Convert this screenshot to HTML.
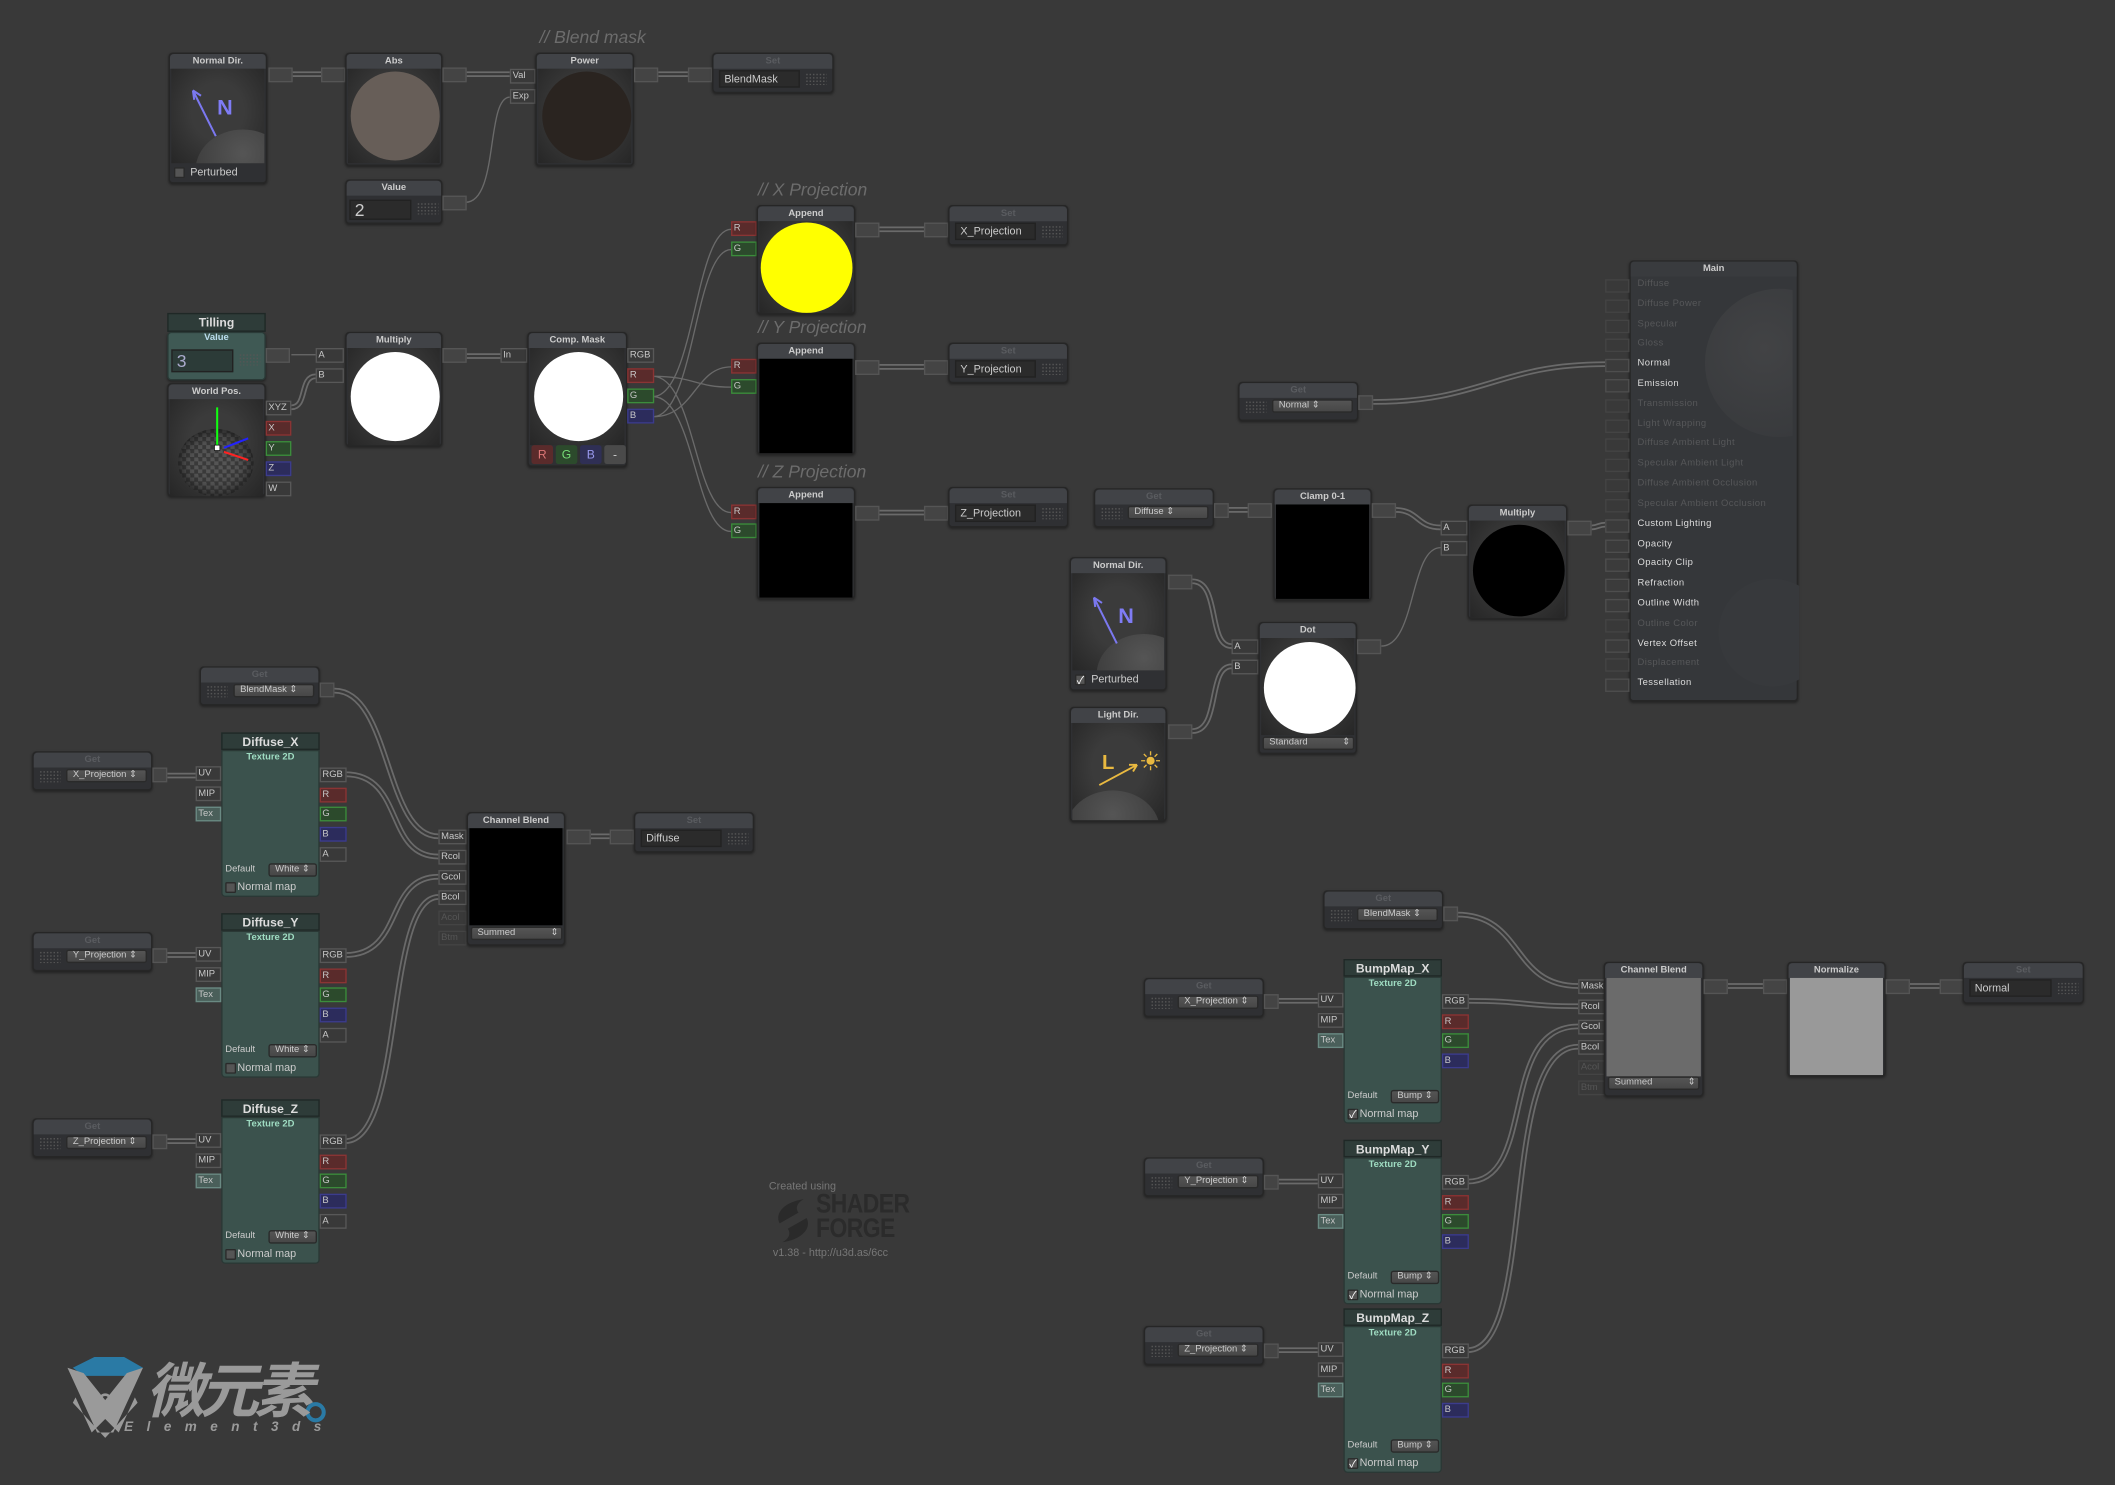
<!DOCTYPE html>
<html><head><meta charset="utf-8"><style>
html,body{margin:0;padding:0;background:#393939;overflow:hidden;width:2115px;height:1485px}
#w{position:absolute;left:0;top:0;width:1568px;height:1101px;transform:scale(1.34885);transform-origin:0 0;font-family:"Liberation Sans","Noto Sans CJK SC",sans-serif;color:#bbb}
#w div{position:absolute;box-sizing:border-box}
.n{background:#2f3033;border:1px solid #262626;border-radius:3px;box-shadow:0 1px 2px rgba(0,0,0,.4)}
.hd{left:0;top:0;right:0;height:11px;background:#414347;border-radius:3px 3px 0 0;font-size:7px;font-weight:bold;text-align:center;line-height:11px;color:#ccc}
.dim{color:#5a5c60}
.pv{left:1px;right:1px;top:11px;background:radial-gradient(ellipse at 50% 45%,#3b3b3b 40%,#262626 100%)}
.c{border-radius:50%}
.p{height:11px;border:1px solid #585858;background:#393939;font-size:7px;line-height:9px;padding-left:1px;color:#c8c8c8}
.pr{background:#5a2b2b;border-color:#8a3434}
.pg{background:#2c4a2c;border-color:#3c8c3c}
.pb{background:#2c2c5c;border-color:#3c3c8c}
.pd{color:#555;border-color:#444;background:#393939}
.ob{width:18px;height:11px;background:#444;border:1px solid #555}
.cm{font-size:13px;font-style:italic;color:#6c6c6c;white-space:nowrap}
.dd{height:10px;background:linear-gradient(#555,#474747);border:1px solid #2a2a2a;border-radius:2px;font-size:7px;line-height:8px;padding-left:4px;color:#ccc;white-space:nowrap}
.fld{height:13px;background:#2b2b2b;border:1px solid #222;font-size:8px;line-height:11px;padding-left:3px;color:#ccc}
.grip{width:16px;height:9px;background-image:radial-gradient(#555 0.6px,transparent 0.7px);background-size:2.5px 2.5px}
.tt{height:13px;width:73px;background:#2e3c39;border:1px solid #1f2826;font-size:9px;font-weight:bold;text-align:center;line-height:12px;color:#ddd}
.tb{width:73px;height:109px;top:13px;left:0;background:#3b524d;border:1px solid #2a3835;border-radius:0 0 3px 3px}
.t2{font-size:7px;font-weight:bold;color:#9fdcc2;text-align:center;left:0;right:0;top:1px}
.sm{font-size:7px;color:#ccc;white-space:nowrap}
.cb{width:8px;height:8px;background:#555;border:1px solid #2a2a2a;border-radius:1px;font-size:8px;line-height:7px;color:#fff;text-align:center}
.mr{font-size:7px;left:5px;white-space:nowrap;letter-spacing:.3px}
.mi{width:18px;height:10px;left:-19px;background:#3b3b3b;border:1px solid #4e4e4e}
</style></head><body><div id="w">

<svg width="1568" height="1101" style="position:absolute;left:0;top:0" fill="none">
<g stroke="#6a6a6a" stroke-width="4.2">
<path d="M216 55H238M345 55H378M488 55H510M216 302C228 302 222 279 234 279M346 264H371M652 170H685M652 272H685M652 380H685M1018 298C1100 298 1110 270 1190 270M910 378H925M1034 378C1052 378 1050 391 1068 391M884 431C905 431 895 479 913 479M884 542C905 542 895 494 913 494M1180 391C1185 391 1185 389 1190 389M248 512C290 512 285 620 325 620M256 574C300 574 285 635 325 635M256 708C300 708 285 650 325 650M256 846C300 846 285 665 325 665M124 575H145M124 708H145M124 846H145M438 620H452M1080 678C1130 678 1120 731 1170 731M1088 742C1130 742 1130 746 1170 746M1088 876C1140 876 1110 761 1170 761M1088 1001C1140 1001 1110 776 1170 776M948 742H977M948 876H977M948 1001H977M1281 731H1307M1416 731H1438"/>
</g>
<g stroke="#393939" stroke-width="1.6">
<path d="M216 55H238M345 55H378M488 55H510M216 302C228 302 222 279 234 279M346 264H371M652 170H685M652 272H685M652 380H685M1018 298C1100 298 1110 270 1190 270M910 378H925M1034 378C1052 378 1050 391 1068 391M884 431C905 431 895 479 913 479M884 542C905 542 895 494 913 494M1180 391C1185 391 1185 389 1190 389M248 512C290 512 285 620 325 620M256 574C300 574 285 635 325 635M256 708C300 708 285 650 325 650M256 846C300 846 285 665 325 665M124 575H145M124 708H145M124 846H145M438 620H452M1080 678C1130 678 1120 731 1170 731M1088 742C1130 742 1130 746 1170 746M1088 876C1140 876 1110 761 1170 761M1088 1001C1140 1001 1110 776 1170 776M948 742H977M948 876H977M948 1001H977M1281 731H1307M1416 731H1438"/>
</g>
<g stroke="#6a6a6a" stroke-width="1">
<path d="M345 150C370 150 360 72 378 72M216 263H234M1024 479C1050 479 1045 406 1068 406"/>
<path d="M484 294C515 294 515 170 542 170M484 309C515 309 515 185 542 185M484 279C515 279 515 287 542 287M484 309C515 309 515 272 542 272M484 279C515 279 515 380 542 380M484 294C515 294 515 394 542 394"/>
</g>
</svg>

<!-- top row -->
<div class="cm" style="left:400px;top:20px">// Blend mask</div>
<div class="n" style="left:125px;top:39px;width:73px;height:97px"><div class="hd">Normal Dir.</div>
<div class="pv" style="height:70px;overflow:hidden"><div class="c" style="left:18px;top:45px;width:70px;height:60px;background:radial-gradient(circle at 50% 30%,#555,#333)"></div>
<svg width="70" height="70" style="position:absolute;left:0;top:0"><path d="M33 50L16 16M16 16l1 7M16 16l6 4" stroke="#7b78f0" stroke-width="1.5" fill="none"/><text x="34" y="34" fill="#7f7cf5" font-size="16" font-weight="bold" font-family="Liberation Sans">N</text></svg></div>
<div class="cb" style="left:3px;top:84px"></div><div class="sm" style="left:15px;top:83px;font-size:8px">Perturbed</div></div>
<div class="ob" style="left:199px;top:50px"></div><div class="ob" style="left:238px;top:50px"></div>

<div class="n" style="left:256px;top:39px;width:72px;height:84px"><div class="hd">Abs</div><div class="pv" style="height:70px"><div class="c" style="left:2px;top:2px;width:66px;height:66px;background:#675e58"></div></div></div>
<div class="ob" style="left:328px;top:50px"></div>
<div class="p" style="left:378px;top:51px;width:19px">Val</div><div class="p" style="left:378px;top:66px;width:19px">Exp</div>
<div class="n" style="left:397px;top:39px;width:73px;height:84px"><div class="hd">Power</div><div class="pv" style="height:70px"><div class="c" style="left:3px;top:2px;width:66px;height:66px;background:#2a2420"></div></div></div>
<div class="ob" style="left:470px;top:50px"></div><div class="ob" style="left:510px;top:50px"></div>
<div class="n" style="left:528px;top:39px;width:90px;height:30px"><div class="hd dim">Set</div><div class="fld" style="left:4px;top:12px;width:60px">BlendMask</div><div class="grip" style="left:68px;top:14px"></div></div>
<div class="n" style="left:256px;top:133px;width:72px;height:33px"><div class="hd">Value</div><div class="fld" style="left:2px;top:14px;width:46px;height:15px;font-size:13px;line-height:14px">2</div><div class="grip" style="left:52px;top:16px"></div></div>
<div class="ob" style="left:328px;top:145px"></div>

<!-- second row -->
<div class="tt" style="left:124px;top:232px;height:14px;font-size:9px">Tilling</div>
<div class="n" style="left:124px;top:246px;width:73px;height:36px;background:#3f5954;border-color:#2a3a37"><div class="sm" style="left:0;right:0;text-align:center;top:0;font-weight:bold;color:#bde">Value</div><div class="fld" style="left:2px;top:12px;width:46px;height:17px;font-size:13px;line-height:15px;background:#2c3b38;color:#aac">3</div><div class="grip" style="left:52px;top:15px"></div></div>
<div class="ob" style="left:197px;top:258px"></div>
<div class="n" style="left:124px;top:284px;width:73px;height:84px"><div class="hd">World Pos.</div>
<div class="pv" style="height:72px"><div class="c" style="left:6px;top:22px;width:56px;height:50px;background:repeating-conic-gradient(#555 0 25%,#3a3a3a 0 50%) 0 0/6px 6px;box-shadow:inset 0 0 12px #111"></div>
<svg width="72" height="72" style="position:absolute;left:0;top:0"><path d="M35 6V34" stroke="#1f1" stroke-width="1.5"/><path d="M40 36L58 29" stroke="#22f" stroke-width="1.5"/><path d="M40 39L58 45" stroke="#f22" stroke-width="1.5"/><rect x="33" y="34" width="4" height="4" fill="#fff" stroke="#000" stroke-width=".5"/></svg></div></div>
<div class="p" style="left:197px;top:297px;width:19px">XYZ</div>
<div class="p pr" style="left:197px;top:312px;width:19px">X</div>
<div class="p pg" style="left:197px;top:327px;width:19px">Y</div>
<div class="p pb" style="left:197px;top:342px;width:19px">Z</div>
<div class="p" style="left:197px;top:357px;width:19px">W</div>
<div class="p" style="left:234px;top:258px;width:21px">A</div><div class="p" style="left:234px;top:273px;width:21px">B</div>
<div class="n" style="left:256px;top:246px;width:72px;height:85px"><div class="hd">Multiply</div><div class="pv" style="height:72px"><div class="c" style="left:2px;top:3px;width:66px;height:66px;background:#fff"></div></div></div>
<div class="ob" style="left:328px;top:258px"></div>
<div class="p" style="left:371px;top:258px;width:20px">In</div>
<div class="n" style="left:391px;top:246px;width:74px;height:100px"><div class="hd">Comp. Mask</div><div class="pv" style="height:72px"><div class="c" style="left:3px;top:3px;width:66px;height:66px;background:#fff"></div></div>
<div style="left:2px;top:83px;width:16px;height:14px;background:#5a2b2b;border-radius:2px;font-size:9px;color:#d77;text-align:center;line-height:14px">R</div>
<div style="left:20px;top:83px;width:16px;height:14px;background:#2c4a2c;border-radius:2px;font-size:9px;color:#7d7;text-align:center;line-height:14px">G</div>
<div style="left:38px;top:83px;width:16px;height:14px;background:#2f2f55;border-radius:2px;font-size:9px;color:#99e;text-align:center;line-height:14px">B</div>
<div style="left:56px;top:83px;width:16px;height:14px;background:#4a4a4a;border-radius:2px;font-size:9px;color:#ccc;text-align:center;line-height:14px">-</div></div>
<div class="p" style="left:465px;top:258px;width:20px">RGB</div>
<div class="p pr" style="left:465px;top:273px;width:20px">R</div>
<div class="p pg" style="left:465px;top:288px;width:20px">G</div>
<div class="p pb" style="left:465px;top:303px;width:20px">B</div>

<!-- appends -->
<div class="cm" style="left:562px;top:133px">// X Projection</div>
<div class="p pr" style="left:542px;top:164px;width:19px">R</div><div class="p pg" style="left:542px;top:179px;width:19px">G</div>
<div class="n" style="left:561px;top:152px;width:73px;height:81px"><div class="hd">Append</div><div class="pv" style="height:68px"><div class="c" style="left:1px;top:1px;width:68px;height:67px;background:#ff0"></div></div></div>
<div class="ob" style="left:634px;top:165px"></div><div class="ob" style="left:685px;top:165px"></div>
<div class="n" style="left:703px;top:152px;width:89px;height:30px"><div class="hd dim">Set</div><div class="fld" style="left:4px;top:12px;width:60px">X_Projection</div><div class="grip" style="left:68px;top:14px"></div></div>

<div class="cm" style="left:562px;top:235px">// Y Projection</div>
<div class="p pr" style="left:542px;top:266px;width:19px">R</div><div class="p pg" style="left:542px;top:281px;width:19px">G</div>
<div class="n" style="left:561px;top:254px;width:73px;height:83px"><div class="hd">Append</div><div class="pv" style="height:70px;background:#000"></div></div>
<div class="ob" style="left:634px;top:267px"></div><div class="ob" style="left:685px;top:267px"></div>
<div class="n" style="left:703px;top:254px;width:89px;height:30px"><div class="hd dim">Set</div><div class="fld" style="left:4px;top:12px;width:60px">Y_Projection</div><div class="grip" style="left:68px;top:14px"></div></div>

<div class="cm" style="left:562px;top:342px">// Z Projection</div>
<div class="p pr" style="left:542px;top:374px;width:19px">R</div><div class="p pg" style="left:542px;top:388px;width:19px">G</div>
<div class="n" style="left:561px;top:361px;width:73px;height:83px"><div class="hd">Append</div><div class="pv" style="height:70px;background:#000"></div></div>
<div class="ob" style="left:634px;top:375px"></div><div class="ob" style="left:685px;top:375px"></div>
<div class="n" style="left:703px;top:361px;width:89px;height:30px"><div class="hd dim">Set</div><div class="fld" style="left:4px;top:12px;width:60px">Z_Projection</div><div class="grip" style="left:68px;top:14px"></div></div>

<!-- Main -->
<div class="n" style="left:1208px;top:193px;width:125px;height:327px;background:#35373a;overflow:visible">
<div class="hd" style="background:#393b3e">Main</div>
<div class="c" style="left:55px;top:20px;width:110px;height:110px;background:radial-gradient(circle at 40% 40%,#424345,#35373a);clip-path:inset(0 45px 0 0)"></div>
<div class="c" style="left:65px;top:235px;width:80px;height:80px;background:#37393c;clip-path:inset(0 20px 0 0)"></div>
<div style="left:0;top:13px;width:1px;height:1px">
<div class="mi" style="top:0;border-color:#444;background:#393939"></div><div class="mi" style="top:15px;border-color:#444;background:#393939"></div><div class="mi" style="top:30px;border-color:#444;background:#393939"></div><div class="mi" style="top:44px;border-color:#444;background:#393939"></div><div class="mi" style="top:59px"></div><div class="mi" style="top:74px"></div><div class="mi" style="top:89px;border-color:#444;background:#393939"></div><div class="mi" style="top:104px;border-color:#444;background:#393939"></div><div class="mi" style="top:118px;border-color:#444;background:#393939"></div><div class="mi" style="top:133px;border-color:#444;background:#393939"></div><div class="mi" style="top:148px;border-color:#444;background:#393939"></div><div class="mi" style="top:163px;border-color:#444;background:#393939"></div><div class="mi" style="top:178px"></div><div class="mi" style="top:193px"></div><div class="mi" style="top:207px"></div><div class="mi" style="top:222px"></div><div class="mi" style="top:237px"></div><div class="mi" style="top:252px;border-color:#444;background:#393939"></div><div class="mi" style="top:267px"></div><div class="mi" style="top:281px;border-color:#444;background:#393939"></div><div class="mi" style="top:296px"></div></div>
<div class="mr" style="top:13px;color:#565759">Diffuse</div>
<div class="mr" style="top:28px;color:#565759">Diffuse Power</div>
<div class="mr" style="top:43px;color:#565759">Specular</div>
<div class="mr" style="top:57px;color:#565759">Gloss</div>
<div class="mr" style="top:72px;color:#ddd">Normal</div>
<div class="mr" style="top:87px;color:#ddd">Emission</div>
<div class="mr" style="top:102px;color:#565759">Transmission</div>
<div class="mr" style="top:117px;color:#565759">Light Wrapping</div>
<div class="mr" style="top:131px;color:#565759">Diffuse Ambient Light</div>
<div class="mr" style="top:146px;color:#565759">Specular Ambient Light</div>
<div class="mr" style="top:161px;color:#565759">Diffuse Ambient Occlusion</div>
<div class="mr" style="top:176px;color:#565759">Specular Ambient Occlusion</div>
<div class="mr" style="top:191px;color:#ddd">Custom Lighting</div>
<div class="mr" style="top:206px;color:#ddd">Opacity</div>
<div class="mr" style="top:220px;color:#ddd">Opacity Clip</div>
<div class="mr" style="top:235px;color:#ddd">Refraction</div>
<div class="mr" style="top:250px;color:#ddd">Outline Width</div>
<div class="mr" style="top:265px;color:#565759">Outline Color</div>
<div class="mr" style="top:280px;color:#ddd">Vertex Offset</div>
<div class="mr" style="top:294px;color:#565759">Displacement</div>
<div class="mr" style="top:309px;color:#ddd">Tessellation</div>
</div>

<!-- right middle -->
<div class="n" style="left:918px;top:283px;width:89px;height:29px"><div class="hd dim">Get</div><div class="grip" style="left:4px;top:13px"></div><div class="dd" style="left:24px;top:12px;width:60px">Normal ⇕</div></div>
<div class="ob" style="left:1007px;top:293px;width:11px"></div>
<div class="n" style="left:811px;top:362px;width:89px;height:29px"><div class="hd dim">Get</div><div class="grip" style="left:4px;top:13px"></div><div class="dd" style="left:24px;top:12px;width:60px">Diffuse ⇕</div></div>
<div class="ob" style="left:900px;top:373px;width:11px"></div><div class="ob" style="left:925px;top:373px"></div>
<div class="n" style="left:944px;top:362px;width:73px;height:83px"><div class="hd">Clamp 0-1</div><div class="pv" style="height:70px;background:#000"></div></div>
<div class="ob" style="left:1017px;top:373px"></div>
<div class="p" style="left:1068px;top:386px;width:20px">A</div><div class="p" style="left:1068px;top:401px;width:20px">B</div>
<div class="n" style="left:1088px;top:374px;width:74px;height:85px"><div class="hd">Multiply</div><div class="pv" style="height:72px"><div class="c" style="left:2px;top:3px;width:68px;height:68px;background:#000"></div></div></div>
<div class="ob" style="left:1162px;top:386px"></div>

<div class="n" style="left:793px;top:413px;width:72px;height:99px"><div class="hd">Normal Dir.</div>
<div class="pv" style="height:72px;overflow:hidden"><div class="c" style="left:18px;top:45px;width:70px;height:60px;background:radial-gradient(circle at 50% 30%,#555,#333)"></div>
<svg width="70" height="72" style="position:absolute;left:0;top:0"><path d="M33 52L16 18M16 18l1 7M16 18l6 4" stroke="#7b78f0" stroke-width="1.5" fill="none"/><text x="34" y="37" fill="#7f7cf5" font-size="16" font-weight="bold" font-family="Liberation Sans">N</text></svg></div>
<div class="cb" style="left:3px;top:86px">✓</div><div class="sm" style="left:15px;top:85px;font-size:8px">Perturbed</div></div>
<div class="ob" style="left:866px;top:426px"></div>
<div class="n" style="left:793px;top:524px;width:72px;height:85px"><div class="hd">Light Dir.</div>
<div class="pv" style="height:72px;overflow:hidden"><div class="c" style="left:-5px;top:50px;width:70px;height:60px;background:radial-gradient(circle at 50% 30%,#555,#333)"></div>
<svg width="70" height="72" style="position:absolute;left:0;top:0"><path d="M20 46L48 31M48 31l-6 0M48 31l-3 5" stroke="#e9b940" stroke-width="1.4" fill="none"/><text x="22" y="34" fill="#e9b940" font-size="15" font-weight="bold" font-family="Liberation Sans">L</text><circle cx="58" cy="28" r="3" fill="#e9b940"/><path d="M58 21v3M58 32v3M51 28h3M62 28h3M53 23l2 2M61 31l2 2M63 23l-2 2M55 31l-2 2" stroke="#e9b940" stroke-width="1"/></svg></div></div>
<div class="ob" style="left:866px;top:537px"></div>
<div class="p" style="left:913px;top:474px;width:20px">A</div><div class="p" style="left:913px;top:489px;width:20px">B</div>
<div class="n" style="left:933px;top:461px;width:73px;height:98px"><div class="hd">Dot</div><div class="pv" style="height:72px"><div class="c" style="left:2px;top:3px;width:68px;height:68px;background:#fff"></div></div><div class="dd" style="left:2px;top:84px;width:68px">Standard <span style="float:right;padding-right:2px">⇕</span></div></div>
<div class="ob" style="left:1006px;top:474px"></div>

<!-- left bottom -->
<div class="n" style="left:148px;top:494px;width:89px;height:29px"><div class="hd dim">Get</div><div class="grip" style="left:4px;top:13px"></div><div class="dd" style="left:24px;top:12px;width:60px">BlendMask ⇕</div></div>
<div class="ob" style="left:237px;top:506px;width:11px"></div>

<div class="n" style="left:24px;top:557px;width:89px;height:29px"><div class="hd dim">Get</div><div class="grip" style="left:4px;top:13px"></div><div class="dd" style="left:24px;top:12px;width:60px">X_Projection ⇕</div></div>
<div class="ob" style="left:113px;top:569px;width:11px"></div>
<div style="left:164px;top:543px;width:1px;height:1px"><div class="tt">Diffuse_X</div><div class="tb"><div class="t2">Texture 2D</div><div class="sm" style="left:2px;top:84px">Default</div><div class="dd" style="left:34px;top:83px;width:36px">White ⇕</div><div class="cb" style="left:2px;top:97px"></div><div class="sm" style="left:11px;top:96px;font-size:8px">Normal map</div></div>
<div class="p" style="left:-19px;top:25px;width:19px">UV</div><div class="p" style="left:-19px;top:40px;width:19px">MIP</div><div class="p" style="left:-19px;top:55px;width:19px;background:#4a5f5a;border-color:#6a8a83">Tex</div>
<div class="p" style="left:73px;top:26px;width:20px">RGB</div><div class="p pr" style="left:73px;top:41px;width:20px">R</div><div class="p pg" style="left:73px;top:55px;width:20px">G</div><div class="p pb" style="left:73px;top:70px;width:20px">B</div><div class="p" style="left:73px;top:85px;width:20px">A</div></div>

<div class="n" style="left:24px;top:691px;width:89px;height:29px"><div class="hd dim">Get</div><div class="grip" style="left:4px;top:13px"></div><div class="dd" style="left:24px;top:12px;width:60px">Y_Projection ⇕</div></div>
<div class="ob" style="left:113px;top:703px;width:11px"></div>
<div style="left:164px;top:677px;width:1px;height:1px"><div class="tt">Diffuse_Y</div><div class="tb"><div class="t2">Texture 2D</div><div class="sm" style="left:2px;top:84px">Default</div><div class="dd" style="left:34px;top:83px;width:36px">White ⇕</div><div class="cb" style="left:2px;top:97px"></div><div class="sm" style="left:11px;top:96px;font-size:8px">Normal map</div></div>
<div class="p" style="left:-19px;top:25px;width:19px">UV</div><div class="p" style="left:-19px;top:40px;width:19px">MIP</div><div class="p" style="left:-19px;top:55px;width:19px;background:#4a5f5a;border-color:#6a8a83">Tex</div>
<div class="p" style="left:73px;top:26px;width:20px">RGB</div><div class="p pr" style="left:73px;top:41px;width:20px">R</div><div class="p pg" style="left:73px;top:55px;width:20px">G</div><div class="p pb" style="left:73px;top:70px;width:20px">B</div><div class="p" style="left:73px;top:85px;width:20px">A</div></div>

<div class="n" style="left:24px;top:829px;width:89px;height:29px"><div class="hd dim">Get</div><div class="grip" style="left:4px;top:13px"></div><div class="dd" style="left:24px;top:12px;width:60px">Z_Projection ⇕</div></div>
<div class="ob" style="left:113px;top:841px;width:11px"></div>
<div style="left:164px;top:815px;width:1px;height:1px"><div class="tt">Diffuse_Z</div><div class="tb"><div class="t2">Texture 2D</div><div class="sm" style="left:2px;top:84px">Default</div><div class="dd" style="left:34px;top:83px;width:36px">White ⇕</div><div class="cb" style="left:2px;top:97px"></div><div class="sm" style="left:11px;top:96px;font-size:8px">Normal map</div></div>
<div class="p" style="left:-19px;top:25px;width:19px">UV</div><div class="p" style="left:-19px;top:40px;width:19px">MIP</div><div class="p" style="left:-19px;top:55px;width:19px;background:#4a5f5a;border-color:#6a8a83">Tex</div>
<div class="p" style="left:73px;top:26px;width:20px">RGB</div><div class="p pr" style="left:73px;top:41px;width:20px">R</div><div class="p pg" style="left:73px;top:55px;width:20px">G</div><div class="p pb" style="left:73px;top:70px;width:20px">B</div><div class="p" style="left:73px;top:85px;width:20px">A</div></div>

<div class="p" style="left:325px;top:615px;width:21px">Mask</div><div class="p" style="left:325px;top:630px;width:21px">Rcol</div><div class="p" style="left:325px;top:645px;width:21px">Gcol</div><div class="p" style="left:325px;top:660px;width:21px">Bcol</div><div class="p pd" style="left:325px;top:675px;width:21px">Acol</div><div class="p pd" style="left:325px;top:690px;width:21px">Btm</div>
<div class="n" style="left:346px;top:602px;width:73px;height:99px"><div class="hd">Channel Blend</div><div class="pv" style="height:72px;background:#000"></div><div class="dd" style="left:2px;top:84px;width:68px">Summed <span style="float:right;padding-right:2px">⇕</span></div></div>
<div class="ob" style="left:420px;top:615px"></div><div class="ob" style="left:452px;top:615px"></div>
<div class="n" style="left:470px;top:602px;width:89px;height:30px"><div class="hd dim">Set</div><div class="fld" style="left:4px;top:12px;width:60px">Diffuse</div><div class="grip" style="left:68px;top:14px"></div></div>

<!-- right bottom -->
<div class="n" style="left:981px;top:660px;width:89px;height:29px"><div class="hd dim">Get</div><div class="grip" style="left:4px;top:13px"></div><div class="dd" style="left:24px;top:12px;width:60px">BlendMask ⇕</div></div>
<div class="ob" style="left:1070px;top:672px;width:11px"></div>

<div class="n" style="left:848px;top:725px;width:89px;height:29px"><div class="hd dim">Get</div><div class="grip" style="left:4px;top:13px"></div><div class="dd" style="left:24px;top:12px;width:60px">X_Projection ⇕</div></div>
<div class="ob" style="left:937px;top:737px;width:11px"></div>
<div style="left:996px;top:711px;width:1px;height:1px"><div class="tt">BumpMap_X</div><div class="tb"><div class="t2">Texture 2D</div><div class="sm" style="left:2px;top:84px">Default</div><div class="dd" style="left:34px;top:83px;width:36px">Bump ⇕</div><div class="cb" style="left:2px;top:97px">✓</div><div class="sm" style="left:11px;top:96px;font-size:8px">Normal map</div></div>
<div class="p" style="left:-19px;top:25px;width:19px">UV</div><div class="p" style="left:-19px;top:40px;width:19px">MIP</div><div class="p" style="left:-19px;top:55px;width:19px;background:#4a5f5a;border-color:#6a8a83">Tex</div>
<div class="p" style="left:73px;top:26px;width:20px">RGB</div><div class="p pr" style="left:73px;top:41px;width:20px">R</div><div class="p pg" style="left:73px;top:55px;width:20px">G</div><div class="p pb" style="left:73px;top:70px;width:20px">B</div></div>

<div class="n" style="left:848px;top:858px;width:89px;height:29px"><div class="hd dim">Get</div><div class="grip" style="left:4px;top:13px"></div><div class="dd" style="left:24px;top:12px;width:60px">Y_Projection ⇕</div></div>
<div class="ob" style="left:937px;top:871px;width:11px"></div>
<div style="left:996px;top:845px;width:1px;height:1px"><div class="tt">BumpMap_Y</div><div class="tb"><div class="t2">Texture 2D</div><div class="sm" style="left:2px;top:84px">Default</div><div class="dd" style="left:34px;top:83px;width:36px">Bump ⇕</div><div class="cb" style="left:2px;top:97px">✓</div><div class="sm" style="left:11px;top:96px;font-size:8px">Normal map</div></div>
<div class="p" style="left:-19px;top:25px;width:19px">UV</div><div class="p" style="left:-19px;top:40px;width:19px">MIP</div><div class="p" style="left:-19px;top:55px;width:19px;background:#4a5f5a;border-color:#6a8a83">Tex</div>
<div class="p" style="left:73px;top:26px;width:20px">RGB</div><div class="p pr" style="left:73px;top:41px;width:20px">R</div><div class="p pg" style="left:73px;top:55px;width:20px">G</div><div class="p pb" style="left:73px;top:70px;width:20px">B</div></div>

<div class="n" style="left:848px;top:983px;width:89px;height:29px"><div class="hd dim">Get</div><div class="grip" style="left:4px;top:13px"></div><div class="dd" style="left:24px;top:12px;width:60px">Z_Projection ⇕</div></div>
<div class="ob" style="left:937px;top:996px;width:11px"></div>
<div style="left:996px;top:970px;width:1px;height:1px"><div class="tt">BumpMap_Z</div><div class="tb"><div class="t2">Texture 2D</div><div class="sm" style="left:2px;top:84px">Default</div><div class="dd" style="left:34px;top:83px;width:36px">Bump ⇕</div><div class="cb" style="left:2px;top:97px">✓</div><div class="sm" style="left:11px;top:96px;font-size:8px">Normal map</div></div>
<div class="p" style="left:-19px;top:25px;width:19px">UV</div><div class="p" style="left:-19px;top:40px;width:19px">MIP</div><div class="p" style="left:-19px;top:55px;width:19px;background:#4a5f5a;border-color:#6a8a83">Tex</div>
<div class="p" style="left:73px;top:26px;width:20px">RGB</div><div class="p pr" style="left:73px;top:41px;width:20px">R</div><div class="p pg" style="left:73px;top:55px;width:20px">G</div><div class="p pb" style="left:73px;top:70px;width:20px">B</div></div>

<div class="p" style="left:1170px;top:726px;width:20px">Mask</div><div class="p" style="left:1170px;top:741px;width:20px">Rcol</div><div class="p" style="left:1170px;top:756px;width:20px">Gcol</div><div class="p" style="left:1170px;top:771px;width:20px">Bcol</div><div class="p pd" style="left:1170px;top:786px;width:20px">Acol</div><div class="p pd" style="left:1170px;top:801px;width:20px">Btm</div>
<div class="n" style="left:1189px;top:713px;width:74px;height:100px"><div class="hd">Channel Blend</div><div class="pv" style="height:73px;background:#6b6b6b"></div><div class="dd" style="left:2px;top:84px;width:68px">Summed <span style="float:right;padding-right:2px">⇕</span></div></div>
<div class="ob" style="left:1263px;top:726px"></div><div class="ob" style="left:1307px;top:726px"></div>
<div class="n" style="left:1325px;top:713px;width:73px;height:85px"><div class="hd">Normalize</div><div class="pv" style="height:72px;background:#999"></div></div>
<div class="ob" style="left:1398px;top:726px"></div><div class="ob" style="left:1438px;top:726px"></div>
<div class="n" style="left:1455px;top:713px;width:90px;height:31px"><div class="hd dim">Set</div><div class="fld" style="left:4px;top:12px;width:61px">Normal</div><div class="grip" style="left:69px;top:14px"></div></div>

<!-- shader forge logo -->
<div style="left:570px;top:875px;font-size:8px;color:#777">Created using</div>
<svg width="40" height="40" style="position:absolute;left:570px;top:885px"><path d="M26 4C12 6 4 14 8 22L22 14C19 10 22 6 26 4ZM10 36C24 34 32 26 28 18L14 26C17 30 14 34 10 36Z" fill="#2a2a2a"/></svg>
<div style="left:605px;top:884px;font-size:20px;font-weight:bold;color:#2b2b2b;line-height:18px;transform:scaleX(.85);transform-origin:0 0;letter-spacing:-.5px">SHADER<br>FORGE</div>
<div style="left:573px;top:924px;font-size:8px;color:#777">v1.38 - http://u3d.as/6cc</div>

<!-- watermark -->
<svg width="200" height="75" style="position:absolute;left:48px;top:1000px">
<path d="M6 14L22 6H44L58 14L50 20H14Z" fill="#2a7aa5"/>
<path d="M2 14L14 18L30 38V52L20 62L8 36L6 40L30 66L54 40L52 36L40 62L30 52V38L46 18L58 14L36 62H24Z" fill="#9a9a9a"/>
<circle cx="30" cy="38" r="4" fill="none" stroke="#9a9a9a" stroke-width="2"/>
<circle cx="186" cy="47" r="6" fill="none" stroke="#2a7aa5" stroke-width="3"/>
</svg>
<div style="left:108px;top:1003px;font-size:44px;font-weight:bold;color:#9a9a9a;font-style:italic;font-family:'Noto Sans CJK SC','WenQuanYi Zen Hei',sans-serif;line-height:50px;letter-spacing:-4px">微元素</div>
<div style="left:92px;top:1053px;font-size:10px;font-style:italic;color:#9a9a9a;letter-spacing:10px;font-weight:bold">Element3ds</div>

</div></body></html>
